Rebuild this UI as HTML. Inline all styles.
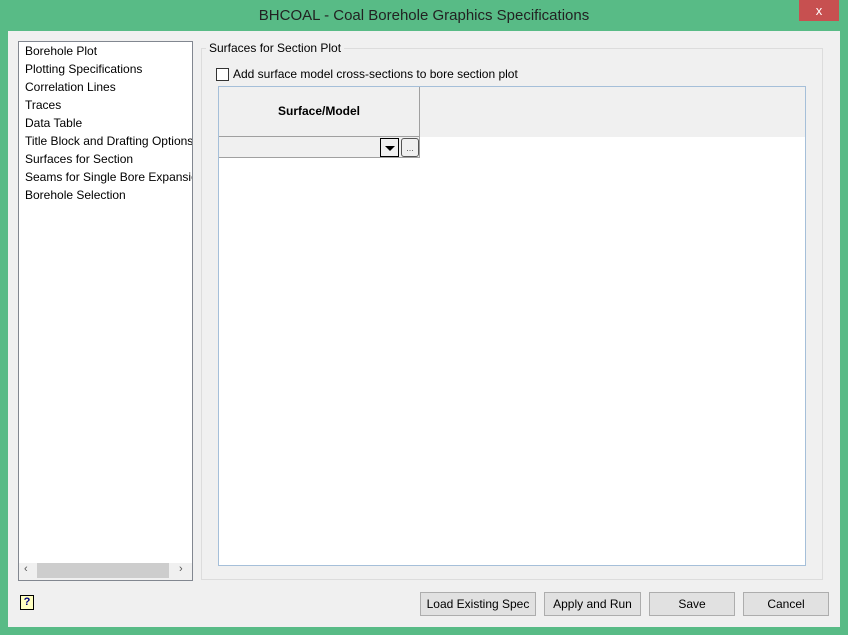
<!DOCTYPE html>
<html><head><style>
*{box-sizing:border-box;margin:0;padding:0}
body{width:848px;height:635px;background:#58bb86;font-family:"Liberation Sans",sans-serif;font-size:12px;color:#000;position:relative;overflow:hidden}
.a{position:absolute}
#client{left:8px;top:31px;width:832px;height:596px;background:#f0f0f0}
.item{position:absolute;left:25px;font-size:12px;white-space:nowrap}
.btn{position:absolute;top:592px;height:24px;border:1px solid #adadad;background:#e1e1e1;text-align:center;line-height:22px;font-size:12px}
</style></head><body>
<div class="a" style="left:0;top:0;width:848px;height:31px;text-align:center;line-height:32px;font-size:15px;color:#222">BHCOAL - Coal Borehole Graphics Specifications</div>
<div class="a" style="left:799px;top:0;width:40px;height:21px;background:#c75050;color:#fff;text-align:center;line-height:21px;font-size:13px">x</div>
<div class="a" id="client"></div>
<div class="a" style="left:18px;top:41px;width:175px;height:540px;background:#fff;border:1px solid #828790;overflow:hidden"></div>
<div class="item" style="top:44px">Borehole Plot</div>
<div class="item" style="top:62px">Plotting Specifications</div>
<div class="item" style="top:80px">Correlation Lines</div>
<div class="item" style="top:98px">Traces</div>
<div class="item" style="top:116px">Data Table</div>
<div class="item" style="top:134px;width:167px;overflow:hidden">Title Block and Drafting Options</div>
<div class="item" style="top:152px">Surfaces for Section</div>
<div class="item" style="top:170px;width:167px;overflow:hidden">Seams for Single Bore Expansion</div>
<div class="item" style="top:188px">Borehole Selection</div>
<div class="a" style="left:19px;top:563px;width:173px;height:17px;background:#f0f0f0"></div>
<div class="a" style="left:37px;top:563px;width:132px;height:15px;background:#cdcdcd"></div>
<div class="a" style="left:24px;top:563px;font-size:11px;color:#555">&lsaquo;</div>
<div class="a" style="left:179px;top:563px;font-size:11px;color:#555">&rsaquo;</div>
<div class="a" style="left:201px;top:48px;width:622px;height:532px;border:1px solid #dcdcdc"></div>
<div class="a" style="left:206px;top:41px;background:#f0f0f0;padding:0 3px">Surfaces for Section Plot</div>
<div class="a" style="left:216px;top:68px;width:13px;height:13px;border:1px solid #333;background:#fff"></div>
<div class="a" style="left:233px;top:67px">Add surface model cross-sections to bore section plot</div>
<div class="a" style="left:218px;top:86px;width:588px;height:480px;background:#fff;border:1px solid #a5bfd9"></div>
<div class="a" style="left:219px;top:87px;width:586px;height:50px;background:#f0f0f0"></div>
<div class="a" style="left:219px;top:87px;width:201px;height:50px;border:1px solid #a0a0a0;border-top:none;border-left:none;text-align:center;line-height:49px;font-weight:bold;font-size:12px">Surface/Model</div>
<div class="a" style="left:219px;top:137px;width:201px;height:21px;background:#f0f0f0;border-right:1px solid #a0a0a0;border-bottom:1px solid #a0a0a0"></div>
<div class="a" style="left:380px;top:138px;width:19px;height:19px;border:1px solid #000;background:#f0f0f0"><div style="margin:7px auto 0;width:0;height:0;border-left:5px solid transparent;border-right:5px solid transparent;border-top:5px solid #000"></div></div>
<div class="a" style="left:401px;top:138px;width:18px;height:19px;border:1px solid #555;border-radius:3px;background:#f0f0f0;font-size:9px;text-align:center;line-height:18px;color:#555">...</div>
<div class="a" style="left:20px;top:595px;width:14px;height:15px;border:1px solid #000;background:#ffffc0;font-size:11px;font-weight:bold;text-align:center;line-height:13px;color:#000080">?</div>
<div class="btn" style="left:420px;width:116px">Load Existing Spec</div>
<div class="btn" style="left:544px;width:97px">Apply and Run</div>
<div class="btn" style="left:649px;width:86px">Save</div>
<div class="btn" style="left:743px;width:86px">Cancel</div>
</body></html>
